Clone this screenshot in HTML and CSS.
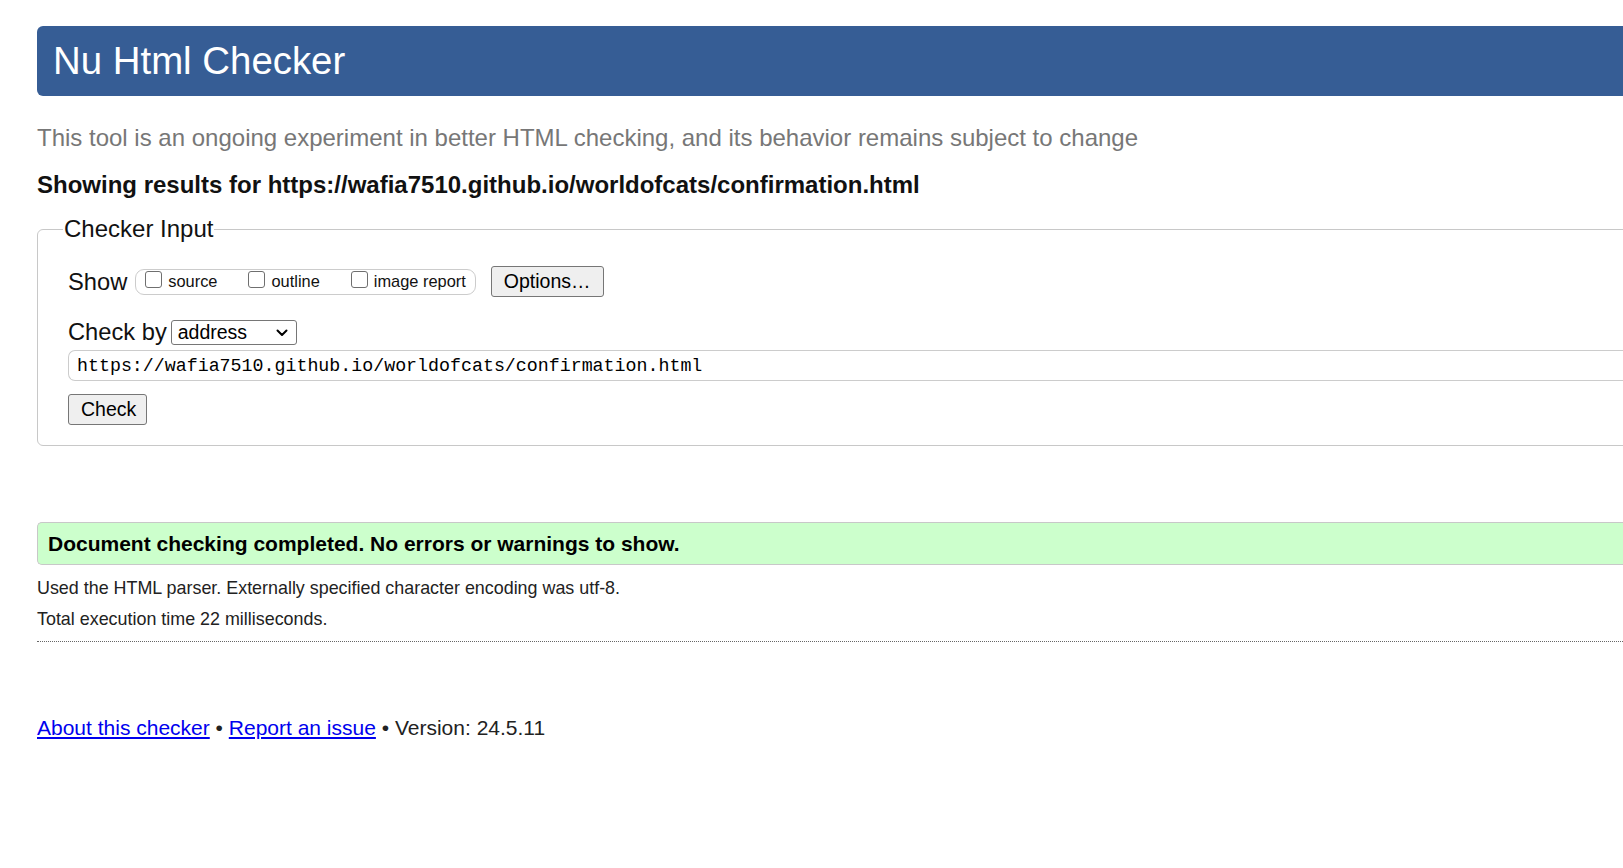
FILE: index.html
```html
<!DOCTYPE html>
<html lang="en">
<head>
<meta charset="utf-8">
<title>Showing results for https://wafia7510.github.io/worldofcats/confirmation.html - Nu Html Checker</title>
<link rel="stylesheet" href="styles.css">
</head>
<body>
<div class="page">
  <h1 class="title">Nu Html Checker</h1>
  <p class="tagline">This tool is an ongoing experiment in better HTML checking, and its behavior remains subject to change</p>
  <p class="results-for">Showing results for https://wafia7510.github.io/worldofcats/confirmation.html</p>

  <form class="checker">
    <fieldset class="checker-input">
      <legend class="legend">Checker Input</legend>
      <div class="row show-row">
        <span class="row-label">Show</span>
        <span class="checks">
          <label class="check"><input type="checkbox" class="box"><span>source</span></label>
          <label class="check"><input type="checkbox" class="box"><span>outline</span></label>
          <label class="check"><input type="checkbox" class="box"><span>image report</span></label>
        </span>
        <button type="button" class="btn options">Options…</button>
      </div>
      <div class="row by-row">
        <span class="row-label">Check by</span>
        <span class="select">
          <span class="select-text">address</span>
          <svg class="chev" width="12" height="8" viewBox="0 0 12 8"><path d="M1.5 1.5 L6 6 L10.5 1.5" fill="none" stroke="#000" stroke-width="2" stroke-linecap="round" stroke-linejoin="round"/></svg>
        </span>
      </div>
      <div class="url">https://wafia7510.github.io/worldofcats/confirmation.html</div>
      <div class="check-row"><button type="button" class="btn check-btn">Check</button></div>
    </fieldset>
  </form>

  <p class="success">Document checking completed. No errors or warnings to show.</p>
  <p class="details">Used the HTML parser. Externally specified character encoding was utf-8.</p>
  <p class="details details-2">Total execution time 22 milliseconds.</p>
  <hr class="sep">
  <p class="footer"><a href="#">About this checker</a> • <a href="#">Report an issue</a> • Version: 24.5.11</p>
</div>
</body>
</html>
```
FILE: styles.css
```css
html, body {
  margin: 0;
  padding: 0;
  overflow: hidden;
  background: #fff;
}
body {
  font-family: "Liberation Sans", Arial, sans-serif;
  color: #111;
}
.page {
  width: 1720px;
  padding: 26px 0 0 37px;
}
.title {
  margin: 0;
  height: 70px;
  line-height: 70px;
  font-size: 38.4px;
  font-weight: normal;
  color: #fff;
  background: #365d95;
  padding-left: 16px;
  border-radius: 6px 0 0 6px;
}
.tagline {
  margin: 28px 0 0;
  font-size: 24px;
  line-height: 28px;
  color: #777;
}
.results-for {
  margin: 19px 0 0;
  font-size: 24px;
  line-height: 28px;
  font-weight: bold;
  color: #111;
}
.checker {
  margin: 16px 0 0;
}
.checker-input {
  margin: 0;
  border: 1px solid #c8c8c8;
  border-radius: 6px;
  padding: 23px 0 20px 30px;
  min-width: 0;
}
.legend {
  font-size: 24px;
  line-height: 28px;
  padding: 0 1px;
  margin-left: -5px;
  color: #111;
}
.row {
  display: flex;
  align-items: center;
}
.show-row {
  height: 31px;
}
.row-label {
  font-size: 23.7px;
  line-height: 26px;
  color: #111;
}
.checks {
  display: flex;
  align-items: center;
  gap: 31px;
  height: 26px;
  box-sizing: border-box;
  margin-left: 8px;
  padding: 0 9px;
  border: 1px solid #ccc;
  border-radius: 9px;
}
.check {
  display: flex;
  align-items: center;
  gap: 6px;
  font-size: 16.4px;
  color: #111;
}
.box {
  appearance: none;
  -webkit-appearance: none;
  margin: 0;
  width: 17px;
  height: 17px;
  border: 1px solid #6f6f6f;
  border-radius: 3px;
  background: #fff;
  position: relative;
  top: -2px;
}
.btn {
  font-family: "Liberation Sans", Arial, sans-serif;
  font-size: 19.5px;
  color: #000;
  background: #efefef;
  border: 1px solid #767676;
  border-radius: 3px;
  height: 31px;
  padding: 0 12px;
}
.options {
  margin-left: 15px;
}
.by-row {
  margin-top: 23px;
  height: 25px;
}
.by-row .row-label {
  line-height: 25px;
  font-size: 23.7px;
}
.select {
  display: flex;
  align-items: center;
  justify-content: space-between;
  box-sizing: border-box;
  width: 126px;
  height: 25px;
  margin-left: 4px;
  padding: 0 8px 0 6px;
  border: 1px solid #767676;
  border-radius: 3px;
  font-size: 19.5px;
  color: #000;
}
.url {
  margin-top: 5px;
  height: 31px;
  box-sizing: border-box;
  line-height: 31px;
  border: 1px solid #ccc;
  border-right: none;
  border-radius: 7px 0 0 7px;
  padding-left: 8px;
  font-family: "Liberation Mono", "DejaVu Sans Mono", monospace;
  font-size: 18.3px;
  color: #000;
}
.check-row {
  margin-top: 13px;
  display: flex;
}
.check-btn {
  width: 79px;
}
.success {
  margin: 76px 0 0;
  height: 43px;
  box-sizing: border-box;
  line-height: 41px;
  background: #ccffcc;
  border: 1px solid #c8c8c8;
  border-right: none;
  border-radius: 5px 0 0 5px;
  padding: 0 10px;
  font-size: 21px;
  font-weight: bold;
  color: #000;
}
.details {
  margin: 12px 0 0;
  font-size: 17.9px;
  line-height: 22px;
  color: #222;
}
.details-2 {
  margin-top: 9px;
}
.sep {
  margin: 11px 0 0;
  border: none;
  border-top: 1px dotted #666;
  height: 0;
}
.footer {
  margin: 73px 0 0;
  font-size: 21px;
  line-height: 25px;
  color: #222;
}
.footer a {
  color: #0000ee;
}
```
